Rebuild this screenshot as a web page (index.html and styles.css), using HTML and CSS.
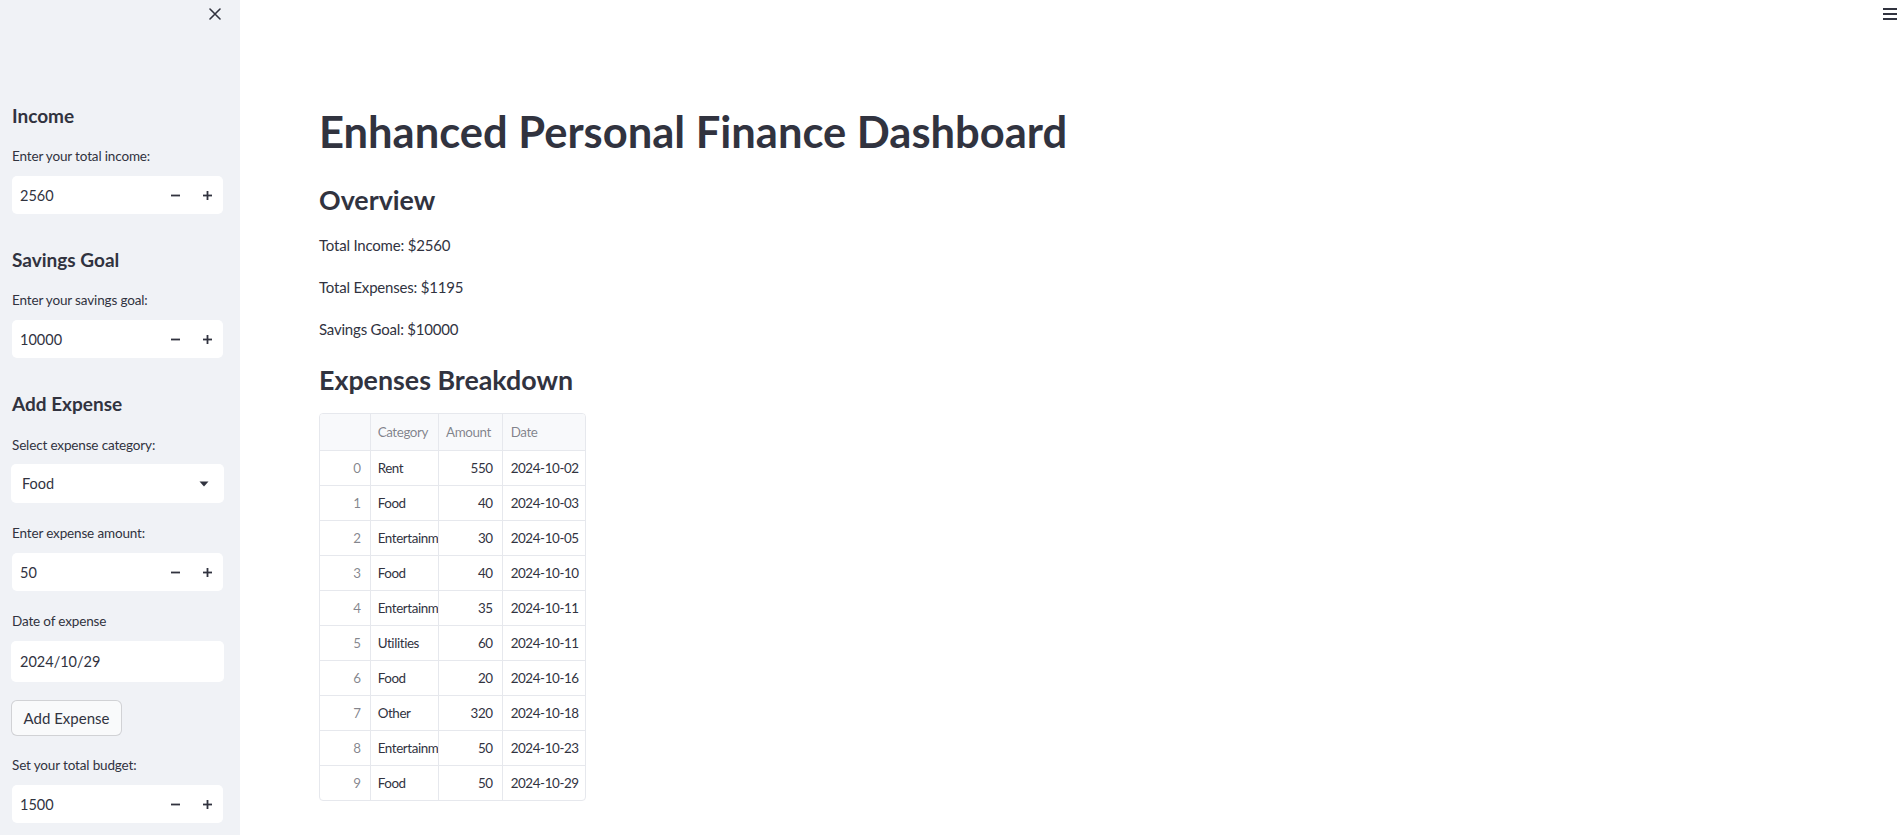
FILE: index.html
```html
<!DOCTYPE html>
<html lang="en">
<head>
<meta charset="utf-8">
<title>Enhanced Personal Finance Dashboard</title>
<link rel="stylesheet" href="styles.css">
</head>
<body>
<div class="app">
  <aside class="sidebar">
    <div class="sb-top">
      <button class="close-btn" aria-label="Close sidebar">
        <svg width="12" height="12" viewBox="0 0 12 12"><path d="M1 1L11 11M11 1L1 11" stroke="#31333f" stroke-width="1.6" stroke-linecap="round"/></svg>
      </button>
    </div>
    <div class="sb-body">
      <h3 class="sb-h sb-h-first">Income</h3>
      <label class="sb-label">Enter your total income:</label>
      <div class="num-input"><span class="val">2560</span>
        <span class="step"><svg width="9" height="9" viewBox="0 0 9 9"><rect x="0" y="3.6" width="9" height="1.8" fill="#31333f"/></svg></span>
        <span class="step"><svg width="9" height="9" viewBox="0 0 9 9"><rect x="0" y="3.6" width="9" height="1.8" fill="#31333f"/><rect x="3.6" y="0" width="1.8" height="9" fill="#31333f"/></svg></span>
      </div>

      <h3 class="sb-h">Savings Goal</h3>
      <label class="sb-label">Enter your savings goal:</label>
      <div class="num-input"><span class="val">10000</span>
        <span class="step"><svg width="9" height="9" viewBox="0 0 9 9"><rect x="0" y="3.6" width="9" height="1.8" fill="#31333f"/></svg></span>
        <span class="step"><svg width="9" height="9" viewBox="0 0 9 9"><rect x="0" y="3.6" width="9" height="1.8" fill="#31333f"/><rect x="3.6" y="0" width="1.8" height="9" fill="#31333f"/></svg></span>
      </div>

      <h3 class="sb-h">Add Expense</h3>
      <label class="sb-label sb-label-after3">Select expense category:</label>
      <div class="select"><span class="val">Food</span>
        <svg class="caret" width="10" height="6" viewBox="0 0 10 6"><path d="M0.5 0.5H9.5L5 5.5Z" fill="#31333f"/></svg>
      </div>
      <label class="sb-label sb-label-gap">Enter expense amount:</label>
      <div class="num-input"><span class="val">50</span>
        <span class="step"><svg width="9" height="9" viewBox="0 0 9 9"><rect x="0" y="3.6" width="9" height="1.8" fill="#31333f"/></svg></span>
        <span class="step"><svg width="9" height="9" viewBox="0 0 9 9"><rect x="0" y="3.6" width="9" height="1.8" fill="#31333f"/><rect x="3.6" y="0" width="1.8" height="9" fill="#31333f"/></svg></span>
      </div>
      <label class="sb-label sb-label-gap">Date of expense</label>
      <div class="date-input"><span class="val">2024/10/29</span></div>
      <button class="btn">Add Expense</button>
      <label class="sb-label sb-label-gap2">Set your total budget:</label>
      <div class="num-input"><span class="val">1500</span>
        <span class="step"><svg width="9" height="9" viewBox="0 0 9 9"><rect x="0" y="3.6" width="9" height="1.8" fill="#31333f"/></svg></span>
        <span class="step"><svg width="9" height="9" viewBox="0 0 9 9"><rect x="0" y="3.6" width="9" height="1.8" fill="#31333f"/><rect x="3.6" y="0" width="1.8" height="9" fill="#31333f"/></svg></span>
      </div>
    </div>
  </aside>
  <main class="main">
    <div class="menu-icon"><span></span><span></span><span></span></div>
    <h1 class="title">Enhanced Personal Finance Dashboard</h1>
    <h2 class="sub">Overview</h2>
    <p class="line">Total Income: $2560</p>
    <p class="line">Total Expenses: $1195</p>
    <p class="line">Savings Goal: $10000</p>
    <h2 class="sub sub2">Expenses Breakdown</h2>
    <div class="table">
      <div class="row head"><div class="c idx"></div><div class="c cat">Category</div><div class="c amt">Amount</div><div class="c date">Date</div></div>
      <div class="row"><div class="c idx">0</div><div class="c cat">Rent</div><div class="c amt">550</div><div class="c date">2024-10-02</div></div>
      <div class="row"><div class="c idx">1</div><div class="c cat">Food</div><div class="c amt">40</div><div class="c date">2024-10-03</div></div>
      <div class="row"><div class="c idx">2</div><div class="c cat">Entertainment</div><div class="c amt">30</div><div class="c date">2024-10-05</div></div>
      <div class="row"><div class="c idx">3</div><div class="c cat">Food</div><div class="c amt">40</div><div class="c date">2024-10-10</div></div>
      <div class="row"><div class="c idx">4</div><div class="c cat">Entertainment</div><div class="c amt">35</div><div class="c date">2024-10-11</div></div>
      <div class="row"><div class="c idx">5</div><div class="c cat">Utilities</div><div class="c amt">60</div><div class="c date">2024-10-11</div></div>
      <div class="row"><div class="c idx">6</div><div class="c cat">Food</div><div class="c amt">20</div><div class="c date">2024-10-16</div></div>
      <div class="row"><div class="c idx">7</div><div class="c cat">Other</div><div class="c amt">320</div><div class="c date">2024-10-18</div></div>
      <div class="row"><div class="c idx">8</div><div class="c cat">Entertainment</div><div class="c amt">50</div><div class="c date">2024-10-23</div></div>
      <div class="row last"><div class="c idx">9</div><div class="c cat">Food</div><div class="c amt">50</div><div class="c date">2024-10-29</div></div>
    </div>
  </main>
</div>
</body>
</html>
```

FILE: styles.css
```css
* { box-sizing: border-box; }
html, body { margin: 0; padding: 0; }
body {
  font-family: Lato, "Noto Sans", sans-serif;
  color: #31333f;
  background: #ffffff;
  width: 1897px;
  height: 835px;
  overflow: hidden;
}
.app { display: flex; height: 835px; }

/* Sidebar */
.sidebar {
  width: 240px;
  flex: 0 0 240px;
  background: #f0f2f6;
  display: flex;
  flex-direction: column;
}
.sb-top {
  height: 28px;
  display: flex;
  justify-content: flex-end;
  align-items: center;
  padding-right: 19px;
}
.close-btn {
  border: 0; background: transparent; padding: 0; width: 12px; height: 12px;
  display: flex; align-items: center; justify-content: center;
}
.sb-body { padding: 0 17px 0 12px; display: flex; flex-direction: column; align-items: stretch; }
.sb-h {
  margin: 32px 0 0 0;
  font-size: 19px;
  line-height: 28px;
  font-weight: 700;
}
.sb-h-first { margin-top: 74px; }
.sb-label {
  display: block;
  margin-top: 16px;
  font-size: 13.5px;
  line-height: 20px;
  letter-spacing: -0.15px;
}
.sb-label-after3 { margin-top: 17px; }
.sb-label-gap { margin-top: 20px; }
.sb-label-gap2 { margin-top: 19px; }
.num-input, .select, .date-input {
  margin-top: 10px;
  height: 38px;
  background: #ffffff;
  border-radius: 5px;
  display: flex;
  align-items: center;
  font-size: 14.5px;
}
.num-input .val { flex: 1; padding-left: 8px; }
.step { width: 32px; height: 38px; display: flex; align-items: center; justify-content: center; }
.select { height: 39px; margin-top: 9px; padding: 0 15px 0 11px; margin-left: -1px; margin-right: -1px; }
.select .val { flex: 1; }
.date-input { height: 41px; margin-top: 10px; padding-left: 9px; margin-left: -1px; margin-right: -1px; }
.btn {
  align-self: flex-start;
  margin-top: 18px;
  height: 36px;
  width: 111px;
  padding: 0;
  margin-left: -1px;
  background: #f9fafb;
  border: 1px solid rgba(49, 51, 63, 0.2);
  border-radius: 6px;
  font-family: inherit;
  font-size: 15px;
  color: #31333f;
}

/* Main */
.main { flex: 1; position: relative; padding-left: 79px; }
.menu-icon {
  position: absolute; top: 8px; right: -6px;
  width: 20px; display: flex; flex-direction: column; gap: 3px;
}
.menu-icon span { display: block; height: 2px; background: #31333f; }
.title {
  margin: 105px 0 0 0;
  font-size: 43.5px;
  line-height: 53px;
  font-weight: 700;
}
.sub { margin: 25px 0 0 0; font-size: 26.8px; line-height: 34px; font-weight: 700; }
.sub2 { margin-top: 22px; }
.line { margin: 18px 0 0 0; font-size: 15px; line-height: 24px; letter-spacing: -0.2px; }
.sub + .line { margin-top: 16px; }

.table {
  margin-top: 16px;
  width: 267px;
  border: 1px solid #e6e8ed;
  border-radius: 4px;
  font-size: 13.4px;
  letter-spacing: -0.4px;
  overflow: hidden;
}
.row { display: flex; height: 35px; border-bottom: 1px solid #e6e8ed; }
.row.last { border-bottom: 0; height: 34px; }
.row.head { height: 37px; background: #f8f9fb; color: rgba(49, 51, 63, 0.6); }
.c { display: flex; align-items: center; border-right: 1px solid #e6e8ed; white-space: nowrap; overflow: hidden; }
.c.date { border-right: 0; }
.idx { width: 51px; justify-content: flex-end; padding-right: 9px; color: rgba(49, 51, 63, 0.6); }
.cat { width: 69px; padding-left: 7px; }
.amt { width: 64px; justify-content: flex-end; padding-right: 9px; }
.head .amt { justify-content: flex-start; padding-left: 7px; }
.date { width: 83px; padding-left: 8px; }
```
